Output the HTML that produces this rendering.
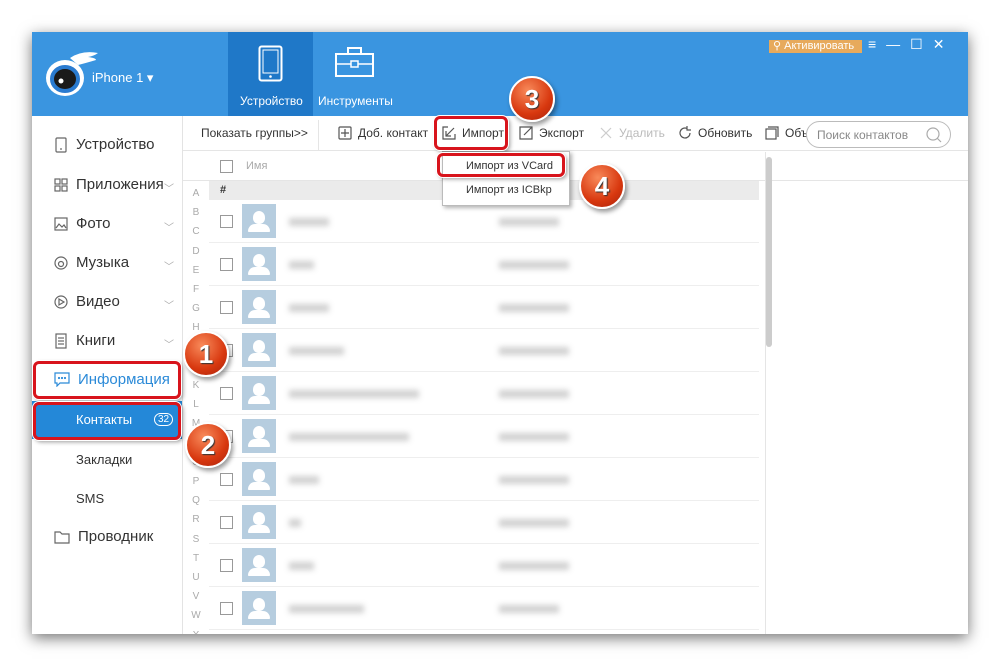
<!DOCTYPE html>
<html><head><meta charset="utf-8"><style>
*{margin:0;padding:0;box-sizing:border-box}
body{width:1000px;height:666px;background:#fff;position:relative;overflow:hidden;font-family:"Liberation Sans","DejaVu Sans",sans-serif;color:#333}
.win{position:absolute;left:32px;top:32px;width:936px;height:602px;background:#fff;box-shadow:0 4px 14px rgba(0,0,0,.55);overflow:hidden}
.hdr{position:absolute;left:0;top:0;width:936px;height:84px;background:#3a95e0}
.abs{position:absolute}
.side .it{position:absolute;left:22px;font-size:15px;color:#333;display:flex;align-items:center;gap:8px}
.side svg{fill:none;stroke:#666;stroke-width:1.2}
.chev{position:absolute;left:132px;font-size:10px;color:#aaa}
.tb{position:absolute;top:94px;font-size:12px;color:#333;display:flex;align-items:center;gap:6px}
.tb svg{fill:none;stroke:#555;stroke-width:1.2}
.row{position:absolute;left:177px;width:550px;height:43px;border-bottom:1px solid #eee}
.cb{position:absolute;width:13px;height:13px;border:1px solid #999;background:#fff}
.av{position:absolute;left:33px;top:4px;width:34px;height:34px;background:#b6cddf url() }
.av::before{content:"";position:absolute;left:11px;top:7px;width:12px;height:13px;border-radius:50% 50% 45% 45%;background:#fff}
.av::after{content:"";position:absolute;left:6px;top:20px;width:22px;height:8px;border-radius:8px 8px 1px 1px;background:#fff}
.blur{position:absolute;height:8px;background:#999;filter:blur(3px);opacity:.45}
.alpha{position:absolute;left:151px;width:26px;text-align:center;font-size:10px;color:#aaa}
.badge{position:absolute;width:46px;height:46px;border-radius:50%;background:radial-gradient(circle at 40% 30%,#f88a5a,#d8380f 60%,#a8200a);box-shadow:2px 3px 5px rgba(0,0,0,.4);color:#fff;font-size:26px;font-weight:bold;text-align:center;line-height:42px;border:2px solid #fff;text-shadow:1px 1px 1px #333}
.red{position:absolute;border:3px solid #d8141c;border-radius:6px;box-shadow:0 0 0 1px #fff,2px 2px 4px rgba(0,0,0,.4)}
</style></head><body>
<div class="win">
<div class="hdr"></div>
<svg class="abs" style="left:12px;top:16px" width="60" height="50" viewBox="0 0 60 50"><path d="M26 10 Q38 2 54 5 Q50 8 44 9 Q52 10 52 12 Q42 15 34 17Z" fill="#fff"/><ellipse cx="21" cy="30" rx="19" ry="18" fill="#fff"/><ellipse cx="21" cy="31" rx="13" ry="12" fill="#1a1a1a" stroke="#2a7bd0" stroke-width="4"/><circle cx="17" cy="33" r="2.5" fill="#fff"/></svg>
<div class="abs" style="left:60px;top:38px;color:#fff;font-size:13px">iPhone 1 ▾</div>
<div class="abs" style="left:196px;top:0;width:85px;height:84px;background:#1f78c8"></div>
<svg class="abs" style="left:226px;top:13px" width="26" height="38"><rect x="1.5" y="1.5" width="22" height="34" rx="2" fill="none" stroke="#fff" stroke-width="2"/><rect x="5" y="5" width="15" height="23" fill="none" stroke="#fff" stroke-width="1"/><circle cx="12.5" cy="31.5" r="1.3" fill="#fff"/></svg>
<div class="abs" style="left:208px;top:62px;color:#fff;font-size:12px">Устройство</div>
<svg class="abs" style="left:303px;top:14px" width="40" height="32"><rect x="1" y="8" width="37" height="22" fill="none" stroke="#fff" stroke-width="2"/><rect x="13" y="2" width="13" height="6" fill="none" stroke="#fff" stroke-width="2"/><line x1="1" y1="18" x2="38" y2="18" stroke="#fff" stroke-width="1.5"/><rect x="16" y="15" width="7" height="6" fill="#3a95e0" stroke="#fff" stroke-width="1.5"/></svg>
<div class="abs" style="left:286px;top:62px;color:#fff;font-size:12px">Инструменты</div>
<div class="abs" style="left:737px;top:8px;width:93px;height:13px;background:#e7aa5c;color:#fff;font-size:11px;line-height:13px;padding-left:4px">⚲ Активировать</div>
<div class="abs" style="left:836px;top:4px;color:#fff;font-size:14px;letter-spacing:10px">≡—☐✕</div>
<div class="side">
<div class="abs" style="left:150px;top:84px;width:1px;height:518px;background:#e3e3e3"></div>
<div class="it" style="top:104px"><svg width="14" height="16"><rect x="2" y="1" width="10" height="14" rx="1"/><line x1="6" y1="12" x2="8" y2="12"/></svg>Устройство</div>
<div class="it" style="top:144px"><svg width="14" height="14"><rect x="1" y="1" width="5" height="5"/><rect x="8" y="1" width="5" height="5"/><rect x="1" y="8" width="5" height="5"/><rect x="8" y="8" width="5" height="5"/></svg>Приложения</div><div class="chev" style="top:148px">﹀</div>
<div class="it" style="top:183px"><svg width="14" height="14"><rect x="1" y="1" width="12" height="12"/><path d="M2 11 L5 7 L8 10 L10 8 L12 11"/></svg>Фото</div><div class="chev" style="top:187px">﹀</div>
<div class="it" style="top:222px"><svg width="14" height="14"><circle cx="7" cy="7" r="6"/><circle cx="7" cy="8" r="2.5"/></svg>Музыка</div><div class="chev" style="top:226px">﹀</div>
<div class="it" style="top:261px"><svg width="14" height="14"><circle cx="7" cy="7" r="6"/><path d="M5 4 L10 7 L5 10Z"/></svg>Видео</div><div class="chev" style="top:265px">﹀</div>
<div class="it" style="top:300px"><svg width="14" height="16"><rect x="2" y="1" width="10" height="14"/><line x1="4" y1="5" x2="10" y2="5"/><line x1="4" y1="8" x2="10" y2="8"/><line x1="4" y1="11" x2="10" y2="11"/></svg>Книги</div><div class="chev" style="top:304px">﹀</div>
<div class="it" style="top:339px;color:#2b8ad8"><svg width="16" height="15" style="stroke:#2b8ad8"><path d="M1 1 H15 V11 H6 L3 14 V11 H1Z"/><circle cx="5" cy="6" r=".5"/><circle cx="8" cy="6" r=".5"/><circle cx="11" cy="6" r=".5"/></svg>Информация</div>
<div class="abs" style="left:0;top:369px;width:150px;height:38px;background:#2488d8"></div>
<div class="abs" style="left:44px;top:380px;color:#fff;font-size:13px">Контакты</div>
<div class="abs" style="left:122px;top:381px;border:1px solid #fff;border-radius:8px;color:#fff;font-size:10px;padding:0 3px">32</div>
<div class="abs" style="left:44px;top:420px;font-size:13px">Закладки</div>
<div class="abs" style="left:44px;top:459px;font-size:13px">SMS</div>
<div class="it" style="top:496px"><svg width="16" height="14"><path d="M1 2 H6 L8 4 H15 V13 H1Z"/></svg>Проводник</div>
</div>
<div class="abs" style="left:151px;top:118px;width:785px;height:1px;background:#e5e5e5"></div>
<div class="abs" style="left:286px;top:88px;width:1px;height:30px;background:#e5e5e5"></div>
<div class="tb" style="left:169px">Показать группы&gt;&gt;</div>
<div class="tb" style="left:306px"><svg width="14" height="14"><rect x="1" y="1" width="12" height="12" rx="1"/><path d="M7 3V11M3 7H11"/></svg>Доб. контакт</div>
<div class="tb" style="left:410px"><svg width="14" height="14"><path d="M6 1H1V13H13V8"/><path d="M12 2L4 10M4 5V10H9"/></svg>Импорт</div>
<div class="tb" style="left:487px"><svg width="14" height="14"><path d="M8 1H1V13H13V6"/><path d="M5 9L13 1M8 1H13V6"/></svg>Экспорт</div>
<div class="tb" style="left:567px;color:#bbb"><svg width="14" height="14" style="stroke:#ccc"><path d="M2 2L12 12M12 2L2 12"/></svg>Удалить</div>
<div class="tb" style="left:646px"><svg width="14" height="14"><path d="M12 7A5 5 0 1 1 9 2.4"/><path d="M9 0V4H13"/></svg>Обновить</div>
<div class="tb" style="left:733px"><svg width="14" height="14"><rect x="1" y="3" width="10" height="10"/><path d="M3 1H13V11"/></svg>Объ</div>
<div class="abs" style="left:774px;top:89px;width:145px;height:27px;border:1px solid #bbb;border-radius:14px;background:#fff;font-size:12px;color:#888;padding:6px 0 0 10px">Поиск контактов<svg style="position:absolute;right:8px;top:5px" width="16" height="16" fill="none" stroke="#aaa" stroke-width="1.2"><circle cx="7" cy="7" r="6"/><path d="M11 11L15 15"/></svg></div>
<div class="abs" style="left:151px;top:148px;width:785px;height:1px;background:#e5e5e5"></div>
<div class="cb" style="left:188px;top:128px"></div>
<div class="abs" style="left:214px;top:128px;font-size:11px;color:#aaa">Имя</div>
<div class="abs" style="left:177px;top:149px;width:550px;height:19px;background:#ebebeb;font-size:11px;padding:3px 11px;font-weight:bold">#</div>
<div class="abs" style="left:733px;top:120px;width:1px;height:482px;background:#e5e5e5"></div>
<div class="abs" style="left:734px;top:125px;width:6px;height:190px;background:#ccc;border-radius:3px"></div>
<div class="alpha" style="top:152px;line-height:19.2px">A<br>B<br>C<br>D<br>E<br>F<br>G<br>H<br>I<br>J<br>K<br>L<br>M<br>N<br>O<br>P<br>Q<br>R<br>S<br>T<br>U<br>V<br>W<br>X</div>
<div class="row" style="top:168px"><div class="cb" style="left:11px;top:15px"></div><div class="av"></div><div class="blur" style="left:80px;top:18px;width:40px"></div><div class="blur" style="left:290px;top:18px;width:60px"></div></div>
<div class="row" style="top:211px"><div class="cb" style="left:11px;top:15px"></div><div class="av"></div><div class="blur" style="left:80px;top:18px;width:25px"></div><div class="blur" style="left:290px;top:18px;width:70px"></div></div>
<div class="row" style="top:254px"><div class="cb" style="left:11px;top:15px"></div><div class="av"></div><div class="blur" style="left:80px;top:18px;width:40px"></div><div class="blur" style="left:290px;top:18px;width:70px"></div></div>
<div class="row" style="top:297px"><div class="cb" style="left:11px;top:15px"></div><div class="av"></div><div class="blur" style="left:80px;top:18px;width:55px"></div><div class="blur" style="left:290px;top:18px;width:70px"></div></div>
<div class="row" style="top:340px"><div class="cb" style="left:11px;top:15px"></div><div class="av"></div><div class="blur" style="left:80px;top:18px;width:130px"></div><div class="blur" style="left:290px;top:18px;width:70px"></div></div>
<div class="row" style="top:383px"><div class="cb" style="left:11px;top:15px"></div><div class="av"></div><div class="blur" style="left:80px;top:18px;width:120px"></div><div class="blur" style="left:290px;top:18px;width:70px"></div></div>
<div class="row" style="top:426px"><div class="cb" style="left:11px;top:15px"></div><div class="av"></div><div class="blur" style="left:80px;top:18px;width:30px"></div><div class="blur" style="left:290px;top:18px;width:70px"></div></div>
<div class="row" style="top:469px"><div class="cb" style="left:11px;top:15px"></div><div class="av"></div><div class="blur" style="left:80px;top:18px;width:12px"></div><div class="blur" style="left:290px;top:18px;width:70px"></div></div>
<div class="row" style="top:512px"><div class="cb" style="left:11px;top:15px"></div><div class="av"></div><div class="blur" style="left:80px;top:18px;width:25px"></div><div class="blur" style="left:290px;top:18px;width:70px"></div></div>
<div class="row" style="top:555px"><div class="cb" style="left:11px;top:15px"></div><div class="av"></div><div class="blur" style="left:80px;top:18px;width:75px"></div><div class="blur" style="left:290px;top:18px;width:60px"></div></div>
<div class="row" style="top:598px"><div class="av"></div></div>
<div class="abs" style="left:410px;top:119px;width:128px;height:55px;background:#fff;border:1px solid #bbb;box-shadow:2px 2px 4px rgba(0,0,0,.3)"></div>
<div class="abs" style="left:434px;top:128px;font-size:11px">Импорт из VCard</div>
<div class="abs" style="left:434px;top:152px;font-size:11px">Импорт из ICBkp</div>
</div>
<div class="red" style="left:434px;top:116px;width:74px;height:34px"></div>
<div class="red" style="left:437px;top:153px;width:128px;height:24px"></div>
<div class="red" style="left:33px;top:361px;width:148px;height:38px"></div>
<div class="red" style="left:33px;top:402px;width:148px;height:38px"></div>
<div class="badge" style="left:509px;top:76px">3</div>
<div class="badge" style="left:579px;top:163px">4</div>
<div class="badge" style="left:183px;top:331px">1</div>
<div class="badge" style="left:185px;top:422px">2</div>
</body></html>
